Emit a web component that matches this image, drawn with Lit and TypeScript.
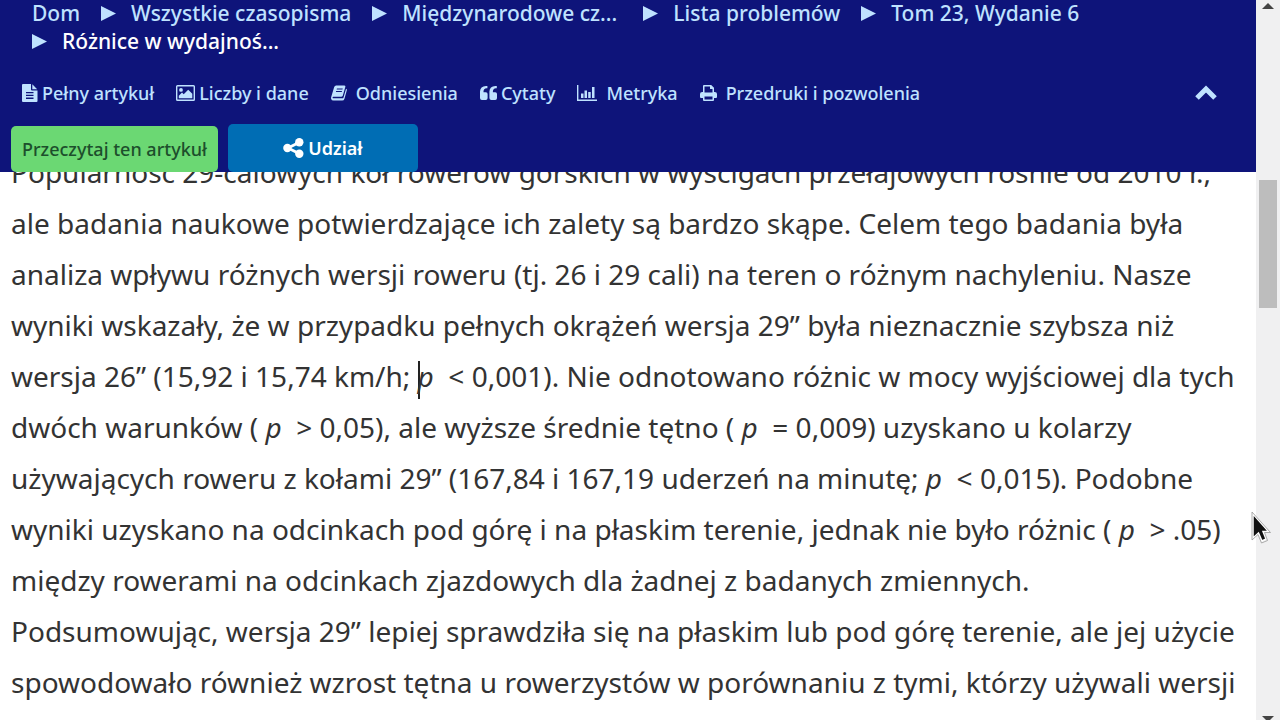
import { LitElement, html, css, svg } from "lit";
import { customElement } from "lit/decorators.js";

interface Crumb {
  label: string;
  kind?: string;
}

interface Tool {
  label: string;
  icon: unknown;
  spaced?: boolean;
}

const CRUMBS: Crumb[] = [
  { label: "Dom" },
  { label: "Wszystkie czasopisma" },
  { label: "Międzynarodowe cz...", kind: "long" },
  { label: "Lista problemów" },
  { label: "Tom 23, Wydanie 6" },
  { label: "Różnice w wydajnoś...", kind: "current" },
];

const TOOLS: Tool[] = [
  {
    label: "Pełny artykuł",
    icon: svg`<svg class="icon" width="16" height="18" viewBox="0 0 16 18" aria-hidden="true">
      <path fill-rule="evenodd" d="M1 0H9V5.5Q9 6.5 10 6.5H15.5V17Q15.5 18 14.500 18H1Q0 18 0 17V1Q0 0 1 0ZM4 8V9.300H11.500V8ZM4 10.800V12.100H11.500V10.800ZM4 13.600V14.900H11.500V13.600ZM10.300 0.300L15.200 5.200H10.300Z"/></svg>`,
  },
  {
    label: "Liczby i dane",
    icon: svg`<svg class="icon" width="19" height="16" viewBox="0 0 19 16" aria-hidden="true">
      <path fill-rule="evenodd" d="M1.500 0H17.500Q19 0 19 1.500V14.500Q19 16 17.500 16H1.500Q0 16 0 14.500V1.500Q0 0 1.500 0ZM1.400 1.400V14.600H17.600V1.400Z"/>
      <circle cx="5" cy="4.900" r="1.900"/><path d="M2.800 13.200V10.700L6 7.600L7.700 9.300L12.200 4.700L16.300 8.800V13.200Z"/></svg>`,
  },
  {
    label: "Odniesienia",
    spaced: true,
    icon: svg`<svg class="icon" width="16" height="16" viewBox="0 0 17 16" aria-hidden="true">
      <path fill-rule="evenodd" d="M5.500 0H14Q15.600 0 15.200 1.500L12.500 10.800Q12.100 12 10.800 12H2.600Q1.500 12 1.700 13Q1.900 13.700 2.900 13.700H12Q13 13.700 13.300 12.700L16 3.400Q17.200 3.900 16.800 5.200L14.300 14Q13.700 16 11.800 16H2.700Q0.600 16 0.100 14Q-0.100 13 0.300 12L3.300 2Q3.900 0 5.500 0ZM6.300 3.200L6 4.300H12.200L12.500 3.200ZM5.500 5.900L5.200 7H11.400L11.700 5.900Z"/></svg>`,
  },
  {
    label: "Cytaty",
    icon: svg`<svg class="icon" width="17" height="14" viewBox="0 0 17 14" aria-hidden="true">
      <path d="M7.400 0V2.300H6.600Q3.500 2.500 3.500 5.600V6.300H5.900Q7.600 6.300 7.600 8V12Q7.600 14 5.800 14H1.900Q0 14 0 12V5.500Q0.200 0.300 6 0ZM16.800 0V2.300H16Q12.900 2.500 12.900 5.600V6.300H15.300Q17 6.300 17 8V12Q17 14 15.200 14H11.300Q9.400 14 9.400 12V5.500Q9.600 0.300 15.400 0Z"/></svg>`,
  },
  {
    label: "Metryka",
    spaced: true,
    icon: svg`<svg class="icon" width="20" height="16" viewBox="0 0 20 16" aria-hidden="true">
      <path d="M0 0H1.400V14.400H20V16H0ZM4 8.500H6.500V13H4ZM7.500 5.500H10V13H7.500ZM11.200 7H13.700V13H11.200ZM15 2H17.500V13H15Z"/></svg>`,
  },
  {
    label: "Przedruki i pozwolenia",
    spaced: true,
    icon: svg`<svg class="icon" width="17" height="16" viewBox="0 0 17 16" aria-hidden="true">
      <path fill-rule="evenodd" d="M3 7V1Q3 0 4 0H11.200L14 2.800V7H14.800Q17 7 17 9V12Q17 13 16 13H14V15Q14 16 13 16H4Q3 16 3 15V13H1Q0 13 0 12V9Q0 7 2.200 7ZM4.500 7.500H12.500V4H10V1.400H4.500ZM4.500 11.500V14.600H12.500V11.500Z"/></svg>`,
  },
];

@customElement("app-root")
export class AppRoot extends LitElement {
  static styles = css`
    :host {
      display: grid;
      grid-template-columns: minmax(0, 1fr) 24px;
      height: 100vh;
      overflow: hidden;
      background: #fff;
      color: #333;
      font-family: "Noto Sans", "Open Sans", sans-serif;
    }
    .page {
      min-width: 0;
      min-height: 0;
      overflow: hidden;
    }
    .bar {
      position: relative;
      z-index: 1;
      display: flow-root;
      background: #0e147a;
      color: #bfe2ff;
      font-weight: 500;
    }
    .crumbs {
      display: flex;
      flex-wrap: wrap;
      column-gap: 21px;
      margin: -1px 0 0;
      padding: 0 32px;
      list-style: none;
      font-size: 21px;
      line-height: 28px;
    }
    .crumb {
      display: flex;
      align-items: center;
      gap: 15px;
    }
    .crumb.long {
      width: 250px;
    }
    .crumb.current {
      color: #fff;
    }
    .arrow {
      fill: #bfe2ff;
    }
    a {
      color: inherit;
      text-decoration: none;
    }
    .tools {
      display: flex;
      align-items: center;
      justify-content: space-between;
      padding: 24px 38px 0 22px;
    }
    .links {
      display: flex;
      flex-wrap: wrap;
      gap: 22px;
      font-size: 18px;
      line-height: 28px;
    }
    .tool {
      display: flex;
      align-items: center;
      gap: 4px;
    }
    .tool.spaced {
      gap: 9px;
    }
    .icon {
      fill: currentColor;
      flex: none;
    }
    button {
      font: inherit;
      border: 0;
      padding: 0;
      color: inherit;
      background: none;
      cursor: pointer;
    }
    .collapse {
      display: flex;
    }
    .actions {
      display: flex;
      align-items: flex-end;
      gap: 10px;
      padding: 17px 11px 0;
      font-size: 18px;
    }
    .read {
      height: 46px;
      padding: 0 11px;
      border-radius: 5px;
      background: #6bd873;
      color: #1d4f2c;
    }
    .share {
      display: flex;
      align-items: center;
      justify-content: center;
      gap: 4px;
      width: 190px;
      height: 48px;
      border-radius: 5px;
      background: #006db4;
      color: #fff;
      font-weight: 600;
    }
    .abstract {
      margin: -25px 0 0;
      padding: 0 11px;
      font-size: 28px;
      line-height: 51px;
    }
    .caret {
      display: inline-block;
      width: 2px;
      height: 38px;
      margin-right: -2px;
      vertical-align: middle;
      background: #222;
    }
    .scroll {
      display: flex;
      flex-direction: column;
      align-items: center;
      background: #f0f0f1;
    }
    .thumb {
      width: 18px;
      height: 128px;
      margin-top: 171px;
      background: #bdbdbd;
    }
    .up {
      margin-top: 3px;
      fill: #444;
    }
    .down {
      margin-top: auto;
      fill: #444;
    }
    .pointer {
      position: absolute;
      left: 1251px;
      top: 511px;
      z-index: 2;
    }
  `;

  render() {
    return html`
      <div class="page">
        <header class="bar">
          <nav aria-label="Okruszki">
            <ol class="crumbs">
              ${CRUMBS.map(
                (c, i) => html`<li class="crumb ${c.kind ?? ""}">
                  ${i > 0
                    ? html`<svg class="arrow" width="15" height="15" viewBox="0 0 15 15" aria-hidden="true"><path d="M0 0L15 7.500L0 15Z" /></svg>`
                    : null}<a href="#">${c.label}</a>
                </li>`
              )}
            </ol>
          </nav>
          <div class="tools">
            <nav class="links" aria-label="Artykuł">
              ${TOOLS.map(
                (t) => html`<a class="tool ${t.spaced ? "spaced" : ""}" href="#">${t.icon}<span>${t.label}</span></a>`
              )}
            </nav>
            <button class="collapse" aria-label="Zwiń">
              <svg width="24" height="16" viewBox="0 0 24 16" aria-hidden="true">
                <path d="M3 13L12 4L21 13" fill="none" stroke="#bfe2ff" stroke-width="5" />
              </svg>
            </button>
          </div>
          <div class="actions">
            <button class="read">Przeczytaj ten artykuł</button>
            <button class="share">
              <svg width="21" height="20" viewBox="0 0 21 20" aria-hidden="true">
                <path d="M16 4.500L5 10L16 15.500" fill="none" stroke="#fff" stroke-width="2.800" />
                <g fill="#fff"><circle cx="16.300" cy="4.300" r="4.200" /><circle cx="4.400" cy="10" r="4.200" /><circle cx="16.300" cy="15.700" r="4.200" /></g>
              </svg>
              <span>Udział</span>
            </button>
          </div>
        </header>
        <p class="abstract">
          Popularność 29-calowych kół rowerów górskich w wyścigach przełajowych rośnie od 2010 r.,
          ale badania naukowe potwierdzające ich zalety są bardzo skąpe. Celem tego badania była
          analiza wpływu różnych wersji roweru (tj. 26 i 29 cali) na teren o różnym nachyleniu. Nasze
          wyniki wskazały, że w przypadku pełnych okrążeń wersja 29” była nieznacznie szybsza niż
          wersja 26” (15,92 i 15,74 km/h; <span class="caret"></span><em>p</em>&nbsp; &lt; 0,001). Nie odnotowano różnic w mocy wyjściowej dla tych
          dwóch warunków ( <em>p</em>&nbsp; &gt; 0,05), ale wyższe średnie tętno ( <em>p</em>&nbsp; = 0,009) uzyskano u kolarzy
          używających roweru z kołami 29” (167,84 i 167,19 uderzeń na minutę; <em>p</em>&nbsp; &lt; 0,015). Podobne
          wyniki uzyskano na odcinkach pod górę i na płaskim terenie, jednak nie było różnic ( <em>p</em>&nbsp; &gt; .05)
          między rowerami na odcinkach zjazdowych dla żadnej z badanych zmiennych.<br />
          Podsumowując, wersja 29” lepiej sprawdziła się na płaskim lub pod górę terenie, ale jej użycie
          spowodowało również wzrost tętna u rowerzystów w porównaniu z tymi, którzy używali wersji
        </p>
      </div>
      <div class="scroll" aria-hidden="true">
        <svg class="up" width="12" height="6" viewBox="0 0 12 6"><path d="M0 6L6 0L12 6Z" /></svg>
        <div class="thumb"></div>
        <svg class="down" width="12" height="4" viewBox="0 0 12 4"><path d="M0 0H12L8 4H4Z" /></svg>
      </div>
      <svg class="pointer" width="20" height="34" viewBox="0 0 20 34" aria-hidden="true">
        <path d="M2 3V27L7.500 22L11 30L15 28L12 20.500H17.500Z" fill="#111" stroke="#fff" stroke-width="1.500" />
        <path d="M1 1V29L7 23.500L10.500 32L16.500 29.500L13.500 21.500H19.500Z" fill="none" stroke="#999" stroke-width="0.800" />
      </svg>
    `;
  }
}
